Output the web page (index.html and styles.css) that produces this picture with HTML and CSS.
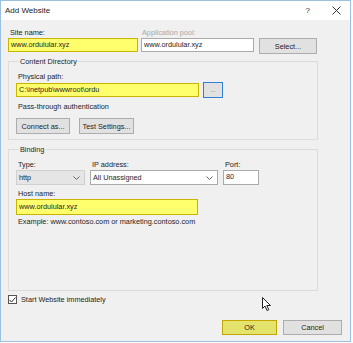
FILE: index.html
```html
<!DOCTYPE html>
<html lang="en">
<head>
  <meta charset="UTF-8" />
  <title>Add Website</title>
  <link rel="stylesheet" href="styles.css">
</head>
<body>
  <div class="dialog">
    <div class="title-bar">
      <span class="title">Add Website</span>
      <span class="help">?</span>
      <svg class="close" width="9" height="9" viewBox="0 0 9 9"><path d="M0.5 0.5 L8.5 8.5 M8.5 0.5 L0.5 8.5" stroke="#333" stroke-width="1"/></svg>
    </div>

    <div class="content">
      <div class="site-row">
        <label class="lbl">Site name:</label>
        <label class="lbl disabled">Application pool:</label>
        <span></span>
        <div class="input hl site-input">www.ordulular.xyz</div>
        <div class="input pool-input">www.ordulular.xyz</div>
        <button class="btn select-btn">Select...</button>
      </div>

      <fieldset class="group dir-group">
        <legend>Content Directory</legend>
        <label class="lbl">Physical path:</label>
        <div class="path-row">
          <div class="input hl path-input">C:\inetpub\wwwroot\ordu</div>
          <button class="btn browse-btn">...</button>
        </div>
        <div class="note">Pass-through authentication</div>
        <div class="btn-row">
          <button class="btn connect-btn">Connect as...</button>
          <button class="btn test-btn">Test Settings...</button>
        </div>
      </fieldset>

      <fieldset class="group bind-group">
        <legend>Binding</legend>
        <div class="bind-row">
          <label class="lbl">Type:</label>
          <label class="lbl">IP address:</label>
          <label class="lbl">Port:</label>
          <div class="select type-select">http
            <svg width="7" height="4" viewBox="0 0 7 4"><path d="M0.5 0.5 L3.5 3.5 L6.5 0.5" fill="none" stroke="#666"/></svg>
          </div>
          <div class="select ip-select">All Unassigned
            <svg width="7" height="4" viewBox="0 0 7 4"><path d="M0.5 0.5 L3.5 3.5 L6.5 0.5" fill="none" stroke="#666"/></svg>
          </div>
          <div class="input port-input">80</div>
        </div>
        <label class="lbl host-lbl">Host name:</label>
        <div class="input hl host-input">www.ordulular.xyz</div>
        <div class="note example">Example: www.contoso.com or marketing.contoso.com</div>
      </fieldset>

      <div class="check-row">
        <span class="checkbox">
          <svg width="7" height="6" viewBox="0 0 7 6"><path d="M0.5 3 L2.5 5 L6.5 0.5" fill="none" stroke="#333" stroke-width="1"/></svg>
        </span>
        <span>Start Website immediately</span>
      </div>

      <div class="footer">
        <button class="btn ok-btn">OK</button>
        <button class="btn cancel-btn">Cancel</button>
      </div>
    </div>

    <svg class="cursor" width="10" height="15" viewBox="0 0 10 15">
      <path d="M0.5 0.5 L0.5 11.5 L3 9 L5 13.5 L6.8 12.7 L4.8 8.5 L8.5 8.5 Z" fill="#fff" stroke="#222" stroke-width="1"/>
    </svg>
  </div>
</body>
</html>
```

FILE: styles.css
```css
html, body {
  margin: 0;
  padding: 0;
  background: #fff;
}

body {
  font-family: "Liberation Sans", Arial, sans-serif;
  font-size: 7.3px;
  color: #1e1e1e;
}

.dialog {
  position: relative;
  width: 351px;
  height: 342px;
  box-sizing: border-box;
  border: 1px solid #9cc0dd;
  background: #f0f0f0;
  display: flex;
  flex-direction: column;
}

.title-bar {
  height: 19px;
  background: #fff;
  display: flex;
  align-items: center;
  padding: 0 9px 0 4px;
  font-size: 8px;
}

.title {
  flex: 1;
}

.help {
  margin-right: 22px;
  color: #333;
}

.content {
  flex: 1;
  padding: 7px 7px 0 7px;
  display: flex;
  flex-direction: column;
}

.lbl {
  display: block;
  height: 11px;
  line-height: 11px;
  padding-left: 2px;
}

.lbl.disabled {
  color: #a8a8a8;
  padding-left: 1px;
}

.input {
  box-sizing: border-box;
  height: 14px;
  line-height: 12px;
  border: 1px solid #aaa;
  background: #fff;
  padding: 0 2px;
  white-space: nowrap;
  overflow: hidden;
}

.input.hl {
  background: #ffff6e;
  border-color: #c9b400;
}

.btn {
  box-sizing: border-box;
  height: 16px;
  margin: 0;
  padding: 0;
  border: 1px solid #adadad;
  background: #e1e1e1;
  font-family: inherit;
  font-size: 7.3px;
  color: #1e1e1e;
}

.site-row {
  display: grid;
  grid-template-columns: 130px 113px 60px;
  column-gap: 3px;
}

.select-btn {
  margin-left: 2px;
}

.group {
  margin: 2px 0 0 0;
  width: 310px;
  box-sizing: border-box;
  border: 1px solid #dcdcdc;
  padding: 4px 7px 5px 7px;
}

.group legend {
  padding: 0 1px;
  margin-left: 3px;
  line-height: 11px;
}

.path-row {
  display: flex;
  gap: 4px;
  align-items: center;
}

.path-input {
  width: 183px;
}

.browse-btn {
  width: 20px;
  height: 16px;
  border: 1px solid #2f7fd6;
  line-height: 8px;
  font-size: 6px;
  color: #555;
}

.note {
  height: 11px;
  line-height: 11px;
  margin-top: 3px;
  padding-left: 2px;
}

.btn-row {
  display: flex;
  gap: 9px;
  margin-top: 6px;
}

.connect-btn {
  width: 54px;
}

.test-btn {
  width: 55px;
}

.bind-group {
  margin-top: 4px;
  height: 147px;
}

.bind-row {
  display: grid;
  grid-template-columns: 69px 128px 36px;
  column-gap: 5px;
}

.select {
  box-sizing: border-box;
  height: 15px;
  border: 1px solid #aaa;
  padding: 0 4px 0 2px;
  display: flex;
  align-items: center;
  justify-content: space-between;
  background: #fff;
}

.type-select {
  background: #e5e5e5;
  border-color: #d0d0d0;
}

.port-input {
  height: 15px;
}

.host-lbl {
  margin-top: 3px;
}

.host-input {
  width: 182px;
  height: 16px;
  line-height: 14px;
}

.example {
  margin-top: 1px;
}

.check-row {
  display: flex;
  align-items: center;
  gap: 4px;
  margin-top: 3px;
  height: 11px;
}

.checkbox {
  box-sizing: border-box;
  width: 9px;
  height: 9px;
  border: 1px solid #555;
  background: #fff;
  display: flex;
  align-items: center;
  justify-content: center;
}

.footer {
  display: flex;
  justify-content: flex-end;
  gap: 6px;
  margin-top: 15px;
  padding-right: 1px;
}

.ok-btn {
  width: 55px;
  height: 15px;
  background: #e4e46c;
  border-color: #c4a600;
}

.cancel-btn {
  width: 59px;
  height: 15px;
}

.cursor {
  position: absolute;
  left: 261px;
  top: 296px;
}
```
